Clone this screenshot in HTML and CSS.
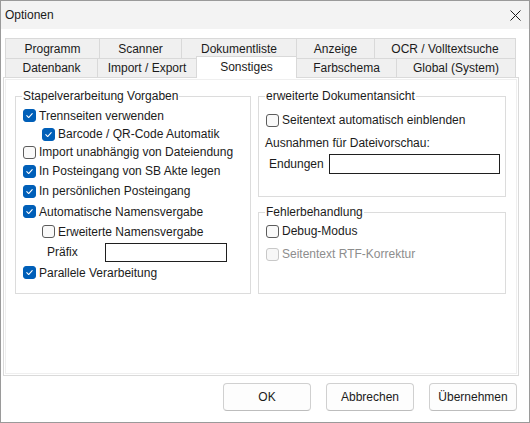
FILE: index.html
```html
<!DOCTYPE html>
<html lang="de">
<head>
<meta charset="utf-8">
<title>Optionen</title>
<link rel="stylesheet" href="styles.css">
</head>
<body>
<div class="window">
  <div class="titlebar">
    <span class="title">Optionen</span>
    <svg class="close" width="11" height="11" viewBox="0 0 11 11"><path d="M0.5 0.5 L10.5 10.5 M10.5 0.5 L0.5 10.5" stroke="#1a1a1a" stroke-width="1" fill="none"/></svg>
  </div>
  <div class="content">
    <div class="tabs">
      <div class="tabrow back">
        <div class="tab t-programm">Programm</div>
        <div class="tab t-scanner">Scanner</div>
        <div class="tab t-dokliste">Dokumentliste</div>
        <div class="tab t-anzeige">Anzeige</div>
        <div class="tab t-ocr">OCR / Volltextsuche</div>
      </div>
      <div class="tabrow front">
        <div class="tab t-datenbank">Datenbank</div>
        <div class="tab t-import">Import / Export</div>
        <div class="tab t-sonstiges active">Sonstiges</div>
        <div class="tab t-farbschema">Farbschema</div>
        <div class="tab t-global">Global (System)</div>
      </div>
    </div>
    <div class="panel">
      <div class="groups">
        <fieldset class="group g1">
          <legend>Stapelverarbeitung Vorgaben</legend>
          <div class="cb r1"><span class="box on"><svg viewBox="0 0 13 13"><path d="M3.3 6.7 L5.5 8.9 L9.7 4.3"/></svg></span>Trennseiten verwenden</div>
          <div class="cb r2 ind"><span class="box on"><svg viewBox="0 0 13 13"><path d="M3.3 6.7 L5.5 8.9 L9.7 4.3"/></svg></span>Barcode / QR-Code Automatik</div>
          <div class="cb r3"><span class="box"></span>Import unabhängig von Dateiendung</div>
          <div class="cb r4"><span class="box on"><svg viewBox="0 0 13 13"><path d="M3.3 6.7 L5.5 8.9 L9.7 4.3"/></svg></span>In Posteingang von SB Akte legen</div>
          <div class="cb r5"><span class="box on"><svg viewBox="0 0 13 13"><path d="M3.3 6.7 L5.5 8.9 L9.7 4.3"/></svg></span>In persönlichen Posteingang</div>
          <div class="cb r6"><span class="box on"><svg viewBox="0 0 13 13"><path d="M3.3 6.7 L5.5 8.9 L9.7 4.3"/></svg></span>Automatische Namensvergabe</div>
          <div class="cb r7 ind"><span class="box"></span>Erweiterte Namensvergabe</div>
          <div class="fieldrow prefix"><span class="lbl lbl-prefix">Präfix</span><span class="field f-prefix"></span></div>
          <div class="cb r9"><span class="box on"><svg viewBox="0 0 13 13"><path d="M3.3 6.7 L5.5 8.9 L9.7 4.3"/></svg></span>Parallele Verarbeitung</div>
        </fieldset>
        <div class="rightcol">
          <fieldset class="group g2">
            <legend>erweiterte Dokumentansicht</legend>
            <div class="cb s1"><span class="box"></span>Seitentext automatisch einblenden</div>
            <div class="plain s2">Ausnahmen für Dateivorschau:</div>
            <div class="fieldrow s3"><span class="lbl lbl-end">Endungen</span><span class="field f-end"></span></div>
          </fieldset>
          <fieldset class="group g3">
            <legend>Fehlerbehandlung</legend>
            <div class="cb e1"><span class="box"></span>Debug-Modus</div>
            <div class="cb e2 disabled"><span class="box"></span>Seitentext RTF-Korrektur</div>
          </fieldset>
        </div>
      </div>
    </div>
    <div class="footer">
      <button class="btn">OK</button>
      <button class="btn">Abbrechen</button>
      <button class="btn">Übernehmen</button>
    </div>
  </div>
</div>
</body>
</html>
```
FILE: styles.css
```css
* { box-sizing: border-box; }
html, body { margin: 0; padding: 0; background: #ffffff; }
body {
  font-family: "Liberation Sans", Arial, sans-serif;
  font-size: 12px;
  color: #1b1b1b;
}
.window {
  width: 530px;
  height: 423px;
  border: 1px solid #9a9a9a;
  background: #ffffff;
  display: flex;
  flex-direction: column;
}
.titlebar {
  height: 28px;
  flex: none;
  display: flex;
  align-items: center;
  justify-content: space-between;
  padding: 0 8px 0 4px;
  background: #f3f3f3;
}
.title { font-size: 12px; line-height: 14px; color: #1a1a1a; }
.close { display: block; }

.content {
  flex: 1;
  padding: 9px 11px 0 1px;
  display: flex;
  flex-direction: column;
}

/* Tabs */
.tabs { margin-left: 3px; }
.tabrow { display: flex; }
.tab {
  flex: none;
  border: 1px solid #d9d9d9;
  background: #f0f0f0;
  margin-left: -1px;
  display: flex;
  align-items: center;
  justify-content: center;
  line-height: 14px;
  color: #1b1b1b;
  white-space: nowrap;
}
.tab:first-child { margin-left: 0; }
.back .tab { height: 21px; }
.front { margin-top: -1px; height: 19px; align-items: flex-end; }
.front .tab { height: 19px; border-bottom: none; }
.front .tab.active {
  height: 22px;
  margin-bottom: -1px;
  background: #ffffff;
  position: relative;
  z-index: 1;
  padding-bottom: 2px;
}
.t-programm { width: 95px; }
.t-scanner { width: 83px; }
.t-dokliste { width: 116px; }
.t-anzeige { width: 79px; }
.t-ocr { width: 142px; }
.t-datenbank { width: 93px; }
.t-import { width: 100px; }
.t-sonstiges { width: 101px; }
.t-farbschema { width: 101px; }
.t-global { width: 120px; }

/* Panel */
.panel {
  margin-left: 1px;
  width: 516px;
  height: 299px;
  border: 1px solid #dadada;
  box-shadow: inset 0 0 0 1px #ffffff, inset 0 0 0 2px #efefef;
  padding: 11px 0 0 11px;
  background: #ffffff;
}
.groups {
  display: grid;
  grid-template-columns: 236px 248px;
  column-gap: 7px;
  align-items: stretch;
}
.rightcol { display: flex; flex-direction: column; }

fieldset.group {
  border: 1px solid #dcdcdc;
  margin: 0;
  padding: 0 7px;
  min-width: 0;
}
fieldset.group legend {
  padding: 0 1px;
  margin-left: -1px;
  font-size: 12px;
  line-height: 14px;
  color: #1b1b1b;
}
fieldset.g1 { padding-bottom: 11px; }
fieldset.g2 { padding-bottom: 21px; }
fieldset.g3 { margin-top: 8px; flex: 1; }

.cb {
  display: flex;
  align-items: center;
  height: 20px;
  line-height: 14px;
  white-space: nowrap;
}
.box {
  flex: none;
  width: 13px;
  height: 13px;
  margin-right: 3px;
  border: 1px solid #5c5c5c;
  border-radius: 3px;
  background: #f9f9f9;
  display: block;
}
.box.on {
  border-color: #005fb8;
  background: #005fb8;
}
.box svg {
  display: block;
  width: 11px;
  height: 11px;
}
.box svg path {
  fill: none;
  stroke: #ffffff;
  stroke-width: 1.3;
  stroke-linecap: round;
  stroke-linejoin: round;
}
.disabled { color: #8d8d8d; }
.disabled .box { border-color: #c8c8c8; background: #f7f7f7; }
.ind { margin-left: 19px; }

.r1 { margin-top: 3px; height: 19px; }
.r2 { height: 18px; }
.r3 { height: 18px; }
.r6 { height: 21px; }
.r7 { height: 19px; }
.r9 { height: 19px; }

.fieldrow { display: flex; align-items: center; }
.prefix { height: 22px; padding-left: 24px; }
.lbl { line-height: 14px; flex: none; }
.lbl-prefix { width: 58px; }
.field {
  display: block;
  border: 1px solid #1f1f1f;
  background: #ffffff;
  flex: none;
}
.f-prefix { width: 122px; height: 19px; }

.s1 { margin-top: 7px; }
.plain { line-height: 14px; height: 20px; display: flex; align-items: center; margin-left: -1px; }
.s2 { margin-top: 3px; }
.s3 { margin-top: 1px; height: 21px; align-items: flex-start; }
.lbl-end { width: 60px; margin-left: 3px; margin-top: 3px; }
.f-end { width: 171px; height: 20px; }

.e1 { margin-top: 2px; }
.e2 { margin-top: 3px; }

/* Footer */
.footer {
  margin-top: 7px;
  display: flex;
  justify-content: flex-end;
  gap: 15px;
  padding-right: 1px;
}
.btn {
  width: 88px;
  height: 28px;
  border: 1px solid #d0d0d0;
  border-bottom-color: #bdbdbd;
  border-radius: 4px;
  background: #fdfdfd;
  font-family: "Liberation Sans", Arial, sans-serif;
  font-size: 12px;
  color: #1b1b1b;
  padding: 0;
}
```
